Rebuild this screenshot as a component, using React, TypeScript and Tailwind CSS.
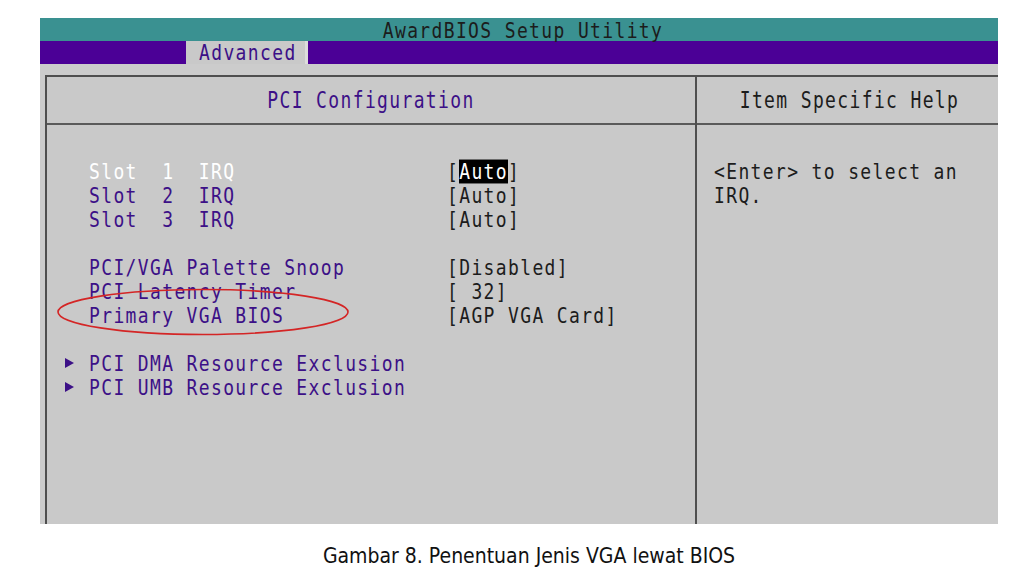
import React from "react";

const mono = "font-['DejaVu_Sans_Mono','Liberation_Mono',monospace] text-[18px] tracking-[1.36px]";
const tall = "leading-[21px] scale-y-[1.14] origin-center";

type Row = { label?: string; value?: React.ReactNode; arrow?: boolean; selected?: boolean };

const rows: Row[] = [
  {
    label: "Slot  1  IRQ",
    selected: true,
    value: (
      <>
        [<span className="bg-black text-white">Auto</span>]
      </>
    ),
  },
  { label: "Slot  2  IRQ", value: "[Auto]" },
  { label: "Slot  3  IRQ", value: "[Auto]" },
  {},
  { label: "PCI/VGA Palette Snoop", value: "[Disabled]" },
  { label: "PCI Latency Timer", value: "[ 32]" },
  { label: "Primary VGA BIOS", value: "[AGP VGA Card]" },
  {},
  { label: "PCI DMA Resource Exclusion", arrow: true },
  { label: "PCI UMB Resource Exclusion", arrow: true },
];

function Arrow() {
  return (
    <svg width="9" height="10" viewBox="0 0 9 10" className="block">
      <polygon points="0,0 9,5 0,10" fill="#3c1087" />
    </svg>
  );
}

export default function App() {
  return (
    <div className="w-[1024px] h-[576px] bg-white overflow-hidden">
      <div className="ml-[40px] pt-[18px] w-[958px]">
        {/* Title bar */}
        <div className={`h-[23px] bg-[#3a9191] flex items-center justify-center pl-[8px] pt-[1px] text-[#1c1c1c] ${mono} whitespace-pre`}>
          <div className={tall}>AwardBIOS Setup Utility</div>
        </div>
        {/* Menu bar */}
        <div className="h-[23px] bg-[#4b0096] flex">
          <div className="w-[146px]" />
          <div className={`w-[122px] bg-[#c9c9c9] border-r-[3px] border-[#dcdcdc] pl-[13px] flex items-center text-[#3c1087] ${mono}`}>
            <div className={tall}>Advanced</div>
          </div>
        </div>
        {/* Main area */}
        <div className="h-[460px] bg-[#cccccc] pt-[11px] pl-[5px] relative">
          <div className="h-full flex border-l-2 border-t-2 border-[#4f4f4f] bg-[#c9c9c9]">
            {/* Left panel */}
            <div className="w-[650px] border-r-2 border-[#4f4f4f] flex flex-col">
              <div className={`h-[48px] border-b-2 border-[#5a5a5a] pt-[14px] flex justify-center text-[#3c1087] ${mono}`}>
                <div className="leading-[21px] scale-y-[1.25] origin-center">PCI Configuration</div>
              </div>
              <div className={`pt-[34px] pl-[18px] ${mono} whitespace-pre`}>
                {rows.map((r, i) => (
                  <div key={i} className="flex items-center h-[24px]">
                    <div className="w-[24px] flex items-center">{r.arrow ? <Arrow /> : null}</div>
                    <div className={`w-[358px] ${tall} ${r.selected ? "text-white" : "text-[#3c1087]"}`}>
                      {r.label ?? ""}
                    </div>
                    <div className={`text-[#1c1c1c] ${tall}`}>{r.value ?? ""}</div>
                  </div>
                ))}
              </div>
            </div>
            {/* Right panel */}
            <div className="flex-1 flex flex-col">
              <div className={`h-[48px] border-b-2 border-[#5a5a5a] pt-[14px] pl-[4px] flex justify-center text-[#1c1c1c] ${mono} whitespace-pre`}>
                <div className="leading-[21px] scale-y-[1.25] origin-center">Item Specific Help</div>
              </div>
              <div className={`pt-[34px] pl-[17px] text-[#1c1c1c] ${mono} whitespace-pre`}>
                <div className="flex items-center h-[24px]">
                  <div className={tall}>{"<Enter> to select an"}</div>
                </div>
                <div className="flex items-center h-[24px]">
                  <div className={tall}>IRQ.</div>
                </div>
              </div>
            </div>
          </div>
          {/* Red ellipse annotation */}
          <svg
            className="absolute left-0 top-0 pointer-events-none"
            width="958"
            height="460"
            viewBox="0 0 958 460"
          >
            <ellipse cx="163" cy="248" rx="145" ry="22.5" fill="none" stroke="#d42525" strokeWidth="1.6" />
          </svg>
        </div>
      </div>
      {/* Caption */}
      <div className="mt-[20px] pl-[34px] flex justify-center font-['DejaVu_Sans',sans-serif] font-stretch-condensed text-[21px] leading-[24px] text-[#111111]">
        Gambar 8. Penentuan Jenis VGA lewat BIOS
      </div>
    </div>
  );
}
